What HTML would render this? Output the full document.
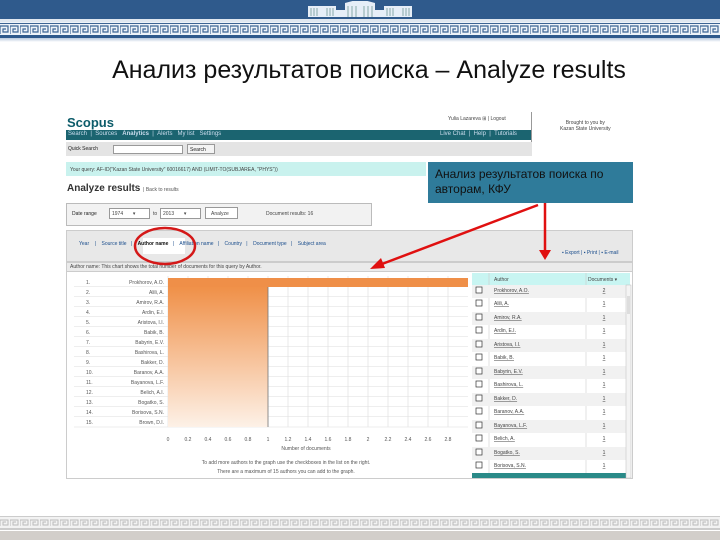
<!DOCTYPE html>
<html><head><meta charset="utf-8"><style>
*{margin:0;padding:0;box-sizing:border-box}
body{width:720px;height:540px;position:relative;background:#fff;font-family:"Liberation Sans",Arial,sans-serif;overflow:hidden}
.a{position:absolute}
.s{font-size:5px;color:#444;white-space:nowrap}
.nav{color:#cde;font-size:6px;white-space:nowrap}
</style></head><body>
<div class="a" style="left:0;top:0;width:720px;height:19px;background:#2f5a8c"></div>
<svg class="a" style="left:300px;top:1px" width="120" height="17"><g fill="#e6eef7"><rect x="8" y="5" width="28" height="11"/><rect x="45" y="2" width="30" height="14"/><rect x="84" y="5" width="28" height="11"/><rect x="36" y="9" width="9" height="7"/><rect x="75" y="9" width="9" height="7"/><polygon points="45,2 60,-2 75,2"/></g><g stroke="#8aa" stroke-width="1"><path d="M11 7v8M14 7v8M17 7v8M27 7v8M30 7v8M33 7v8M48 5v11M52 5v11M56 5v11M64 5v11M68 5v11M72 5v11M87 7v8M90 7v8M93 7v8M103 7v8M106 7v8M109 7v8"/></g></svg>
<div class="a" style="left:0;top:19px;width:720px;height:3px;background:#dfe7f0"></div>
<svg class="a" style="left:0;top:22px" width="720" height="16"><defs><pattern id="m" width="10" height="10" patternUnits="userSpaceOnUse" y="3"><path d="M0 9V1h8v6H3V4h3" fill="none" stroke="#3c6494" stroke-width="1.2"/></pattern></defs><rect width="720" height="16" fill="#eef3f8"/><rect y="1" width="720" height="1" fill="#3c6494"/><rect y="3" width="720" height="10" fill="url(#m)"/><rect y="13" width="720" height="3" fill="#2f5a8c"/></svg>
<div class="a" style="left:0;top:38px;width:720px;height:4px;background:linear-gradient(#b8c8dc,#fff)"></div>
<div class="a" style="left:0;top:56px;width:738px;text-align:center;font-size:25px;color:#111;white-space:nowrap">Анализ результатов поиска – Analyze results</div>

<div class="a" style="left:67px;top:115px;font-size:13px;font-weight:bold;color:#0c5c6a">Scopus</div>
<div class="a s" style="left:448px;top:116px">Yulia Lazareva ⊞ | Logout</div>
<div class="a" style="left:531px;top:112px;width:1px;height:30px;background:#999"></div>
<div class="a s" style="left:560px;top:120px;text-align:center">Brought to you by<br>Kazan State University</div>
<div class="a" style="left:66px;top:130px;width:465px;height:10px;background:#1b6470"></div>
<div class="a nav" style="left:68px;top:131px">Search &nbsp;| &nbsp;Sources &nbsp;&nbsp;<b>Analytics</b> &nbsp;| &nbsp;Alerts &nbsp;&nbsp;My&nbsp;list &nbsp;&nbsp;Settings</div>
<div class="a nav" style="left:440px;top:131px">Live&nbsp;Chat &nbsp;| &nbsp;Help &nbsp;| &nbsp;Tutorials</div>
<div class="a" style="left:66px;top:142px;width:466px;height:14px;background:#e4e4e4"></div>
<div class="a s" style="left:68px;top:146px;color:#222">Quick Search</div>
<div class="a" style="left:113px;top:145px;width:70px;height:9px;background:#fff;border:1px solid #999"></div>
<div class="a s" style="left:187px;top:144px;width:28px;height:10px;border:1px solid #999;background:#f4f4f4;padding:2px;color:#222">Search</div>
<div class="a" style="left:66px;top:162px;width:360px;height:14px;background:#c9f2ee"></div>
<div class="a s" style="left:70px;top:167px">Your query: AF-ID("Kazan State University" 60016617) AND (LIMIT-TO(SUBJAREA, "PHYS"))</div>
<div class="a" style="left:67px;top:183px;font-size:10px;font-weight:bold;color:#333">Analyze results <span style="font-size:5px;font-weight:normal;color:#555">| Back to results</span></div>
<div class="a" style="left:428px;top:162px;width:205px;height:41px;background:#2f7b9a"></div>
<div class="a" style="left:435px;top:167px;font-size:12px;line-height:15px;color:#111">Анализ результатов поиска по<br>авторам, КФУ</div>

<div class="a" style="left:66px;top:203px;width:306px;height:23px;border:1px solid #bbb;background:#f2f2f2"></div>
<div class="a s" style="left:72px;top:211px;color:#222">Date range</div>
<div class="a" style="left:109px;top:208px;width:41px;height:11px;border:1px solid #999;background:#fff"></div>
<div class="a s" style="left:112px;top:211px">1974 &nbsp;&nbsp;&nbsp;&nbsp;&nbsp;&nbsp;▾</div>
<div class="a s" style="left:153px;top:211px">to</div>
<div class="a" style="left:160px;top:208px;width:41px;height:11px;border:1px solid #999;background:#fff"></div>
<div class="a s" style="left:163px;top:211px">2013 &nbsp;&nbsp;&nbsp;&nbsp;&nbsp;&nbsp;▾</div>
<div class="a s" style="left:205px;top:207px;width:33px;height:12px;border:1px solid #999;background:#fff;padding:3px 5px">Analyze</div>
<div class="a s" style="left:266px;top:211px">Document results: 16</div>

<div class="a" style="left:66px;top:230px;width:567px;height:32px;background:#e8e8e8;border:1px solid #ccc"></div>
<div class="a" style="left:143px;top:238px;width:42px;height:16px;background:#fff"></div>
<div class="a s" style="left:79px;top:241px;color:#1a4d8c">Year &nbsp;&nbsp;&nbsp;| &nbsp;&nbsp;&nbsp;Source&nbsp;title &nbsp;&nbsp;| &nbsp;&nbsp;&nbsp;<b style="color:#111">Author&nbsp;name</b> &nbsp;&nbsp;| &nbsp;&nbsp;&nbsp;Affiliation&nbsp;name &nbsp;&nbsp;| &nbsp;&nbsp;&nbsp;Country &nbsp;&nbsp;| &nbsp;&nbsp;&nbsp;Document&nbsp;type &nbsp;&nbsp;| &nbsp;&nbsp;&nbsp;Subject&nbsp;area</div>
<div class="a s" style="left:562px;top:250px;color:#1a4d8c">▪ Export | ▪ Print | ▪ E-mail</div>
<div class="a" style="left:66px;top:262px;width:567px;height:10px;background:#ebebeb;border:1px solid #ccc"></div>
<div class="a s" style="left:70px;top:264px">Author name: This chart shows the total number of documents for this query by Author.</div>
<div class="a" style="left:66px;top:272px;width:567px;height:207px;border:1px solid #ccc;border-top:none"></div>

<svg class="a" style="left:66px;top:272px" width="410" height="206">
<defs><linearGradient id="g" x1="0" y1="0" x2="0" y2="1"><stop offset="0" stop-color="#ef8a3e"/><stop offset="1" stop-color="#fdf1e7"/></linearGradient></defs>
<g stroke="#ddd" stroke-width="0.6">
<path d="M102 4v151M122 4v151M142 4v151M162 4v151M182 4v151M202 4v151M222 4v151M242 4v151M262 4v151M282 4v151M302 4v151M322 4v151M342 4v151M362 4v151M382 4v151"/>
<path d="M8 14.5h394M8 24.5h394M8 34.5h394M8 44.5h394M8 54.5h394M8 64.5h394M8 74.5h394M8 84.5h394M8 94.5h394M8 104.5h394M8 114.5h394M8 124.5h394M8 134.5h394M8 144.5h394M8 155h394"/>
</g>
<rect x="102" y="6" width="100" height="149" fill="url(#g)"/>
<rect x="102" y="6" width="300" height="9" fill="#ef8f48"/>
<path d="M202 15v140" stroke="#777" stroke-width="0.8"/>
<g font-size="5" fill="#555" font-family="Liberation Sans">
<text x="20" y="12">1.</text><text x="98" y="12" text-anchor="end">Prokhorov, A.O.</text>
<text x="20" y="22">2.</text><text x="98" y="22" text-anchor="end">Alili, A.</text>
<text x="20" y="32">3.</text><text x="98" y="32" text-anchor="end">Amirov, R.A.</text>
<text x="20" y="42">4.</text><text x="98" y="42" text-anchor="end">Ardin, E.I.</text>
<text x="20" y="52">5.</text><text x="98" y="52" text-anchor="end">Aristova, I.I.</text>
<text x="20" y="62">6.</text><text x="98" y="62" text-anchor="end">Babik, B.</text>
<text x="20" y="72">7.</text><text x="98" y="72" text-anchor="end">Babyrin, E.V.</text>
<text x="20" y="82">8.</text><text x="98" y="82" text-anchor="end">Bashirova, L.</text>
<text x="20" y="92">9.</text><text x="98" y="92" text-anchor="end">Bakker, D.</text>
<text x="20" y="102">10.</text><text x="98" y="102" text-anchor="end">Baranov, A.A.</text>
<text x="20" y="112">11.</text><text x="98" y="112" text-anchor="end">Bayanova, L.F.</text>
<text x="20" y="122">12.</text><text x="98" y="122" text-anchor="end">Belich, A.I.</text>
<text x="20" y="132">13.</text><text x="98" y="132" text-anchor="end">Bogatko, S.</text>
<text x="20" y="142">14.</text><text x="98" y="142" text-anchor="end">Borisova, S.N.</text>
<text x="20" y="152">15.</text><text x="98" y="152" text-anchor="end">Brown, D.I.</text>
<g text-anchor="middle"><text x="102" y="169">0</text><text x="122" y="169">0.2</text><text x="142" y="169">0.4</text><text x="162" y="169">0.6</text><text x="182" y="169">0.8</text><text x="202" y="169">1</text><text x="222" y="169">1.2</text><text x="242" y="169">1.4</text><text x="262" y="169">1.6</text><text x="282" y="169">1.8</text><text x="302" y="169">2</text><text x="322" y="169">2.2</text><text x="342" y="169">2.4</text><text x="362" y="169">2.6</text><text x="382" y="169">2.8</text>
<text x="240" y="178">Number of documents</text>
<text x="220" y="192">To add more authors to the graph use the checkboxes in the list on the right.</text>
<text x="220" y="201">There are a maximum of 15 authors you can add to the graph.</text></g>
</g></svg>

<svg class="a" style="left:472px;top:272px" width="160" height="206">
<rect x="0" y="1" width="158" height="12" fill="#c8f5f2"/>
<g font-size="5" fill="#444" font-family="Liberation Sans">
<text x="22" y="9">Author</text><text x="116" y="9">Documents ▾</text>
</g>
<path d="M17 1v205M114 1v205" stroke="#ccc" stroke-width="0.6"/>
<g fill="#f1f1f1"><rect y="13" width="154" height="13"/><rect y="40" width="154" height="13"/><rect y="67" width="154" height="13"/><rect y="94" width="154" height="13"/><rect y="121" width="154" height="13"/><rect y="148" width="154" height="13"/><rect y="175" width="154" height="13"/></g>
<rect y="201" width="154" height="5" fill="#2a8a88"/>
<rect x="154" y="13" width="5" height="193" fill="#f4f4f4" stroke="#bbb" stroke-width="0.5"/>
<rect x="155" y="24" width="3" height="18" fill="#ddd"/>
<g fill="#fff" stroke="#333" stroke-width="0.7">
<rect x="4" y="15" width="6" height="6"/><rect x="4" y="28" width="6" height="6"/><rect x="4" y="42" width="6" height="6"/><rect x="4" y="55" width="6" height="6"/><rect x="4" y="69" width="6" height="6"/><rect x="4" y="82" width="6" height="6"/><rect x="4" y="96" width="6" height="6"/><rect x="4" y="109" width="6" height="6"/><rect x="4" y="123" width="6" height="6"/><rect x="4" y="136" width="6" height="6"/><rect x="4" y="150" width="6" height="6"/><rect x="4" y="163" width="6" height="6"/><rect x="4" y="177" width="6" height="6"/><rect x="4" y="190" width="6" height="6"/></g>
<g font-size="5" fill="#444" font-family="Liberation Sans" text-decoration="underline">
<text x="22" y="20">Prokhorov, A.O.</text><text x="22" y="33">Alili, A.</text><text x="22" y="47">Amirov, R.A.</text><text x="22" y="60">Ardin, E.I.</text><text x="22" y="74">Aristova, I.I.</text><text x="22" y="87">Babik, B.</text><text x="22" y="101">Babyrin, E.V.</text><text x="22" y="114">Bashirova, L.</text><text x="22" y="128">Bakker, D.</text><text x="22" y="141">Baranov, A.A.</text><text x="22" y="155">Bayanova, L.F.</text><text x="22" y="168">Belich, A.</text><text x="22" y="182">Bogatko, S.</text><text x="22" y="195">Borisova, S.N.</text>
<g text-anchor="middle"><text x="132" y="20">2</text><text x="132" y="33">1</text><text x="132" y="47">1</text><text x="132" y="60">1</text><text x="132" y="74">1</text><text x="132" y="87">1</text><text x="132" y="101">1</text><text x="132" y="114">1</text><text x="132" y="128">1</text><text x="132" y="141">1</text><text x="132" y="155">1</text><text x="132" y="168">1</text><text x="132" y="182">1</text><text x="132" y="195">1</text></g>
</g></svg>

<svg class="a" style="left:0;top:0" width="720" height="540">
<ellipse cx="165" cy="246" rx="30" ry="18" fill="none" stroke="#d41818" stroke-width="2.5"/>
<path d="M545 203V252" stroke="#e01010" stroke-width="2.5"/>
<polygon points="539,250 551,250 545,260" fill="#e01010"/>
<path d="M538 205L382 264" stroke="#e01010" stroke-width="2.5"/>
<polygon points="370,269 381,258 385,268" fill="#e01010"/>
</svg>

<svg class="a" style="left:0;top:516px" width="720" height="24"><defs><pattern id="m2" width="10" height="8" patternUnits="userSpaceOnUse" y="3"><path d="M0 7V1h8v5H3V3h3" fill="none" stroke="#bbb" stroke-width="1"/></pattern></defs><rect width="720" height="14" fill="#f2f2f2"/><rect y="0" width="720" height="1" fill="#ccc"/><rect y="2" width="720" height="9" fill="url(#m2)"/><rect y="12" width="720" height="2" fill="#ccc"/><rect y="15" width="720" height="9" fill="#d2ceca"/></svg>
</body></html>
